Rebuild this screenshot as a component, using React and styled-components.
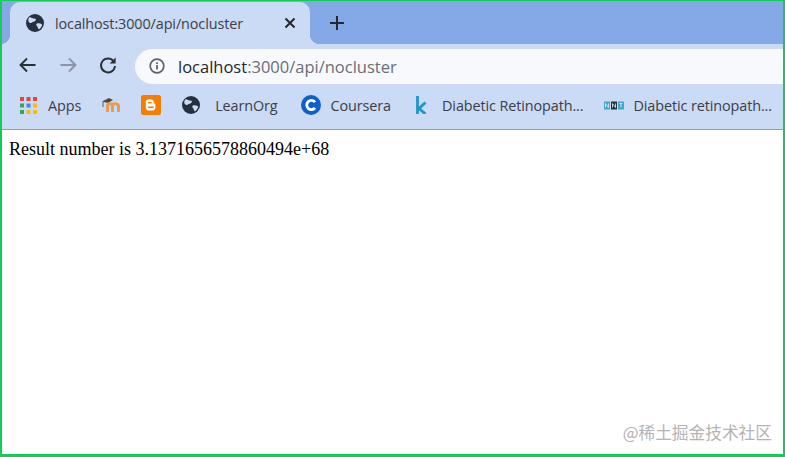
import React from 'react'
import styled, { createGlobalStyle } from 'styled-components'

const GlobalStyle = createGlobalStyle`
  html, body {
    margin: 0;
    padding: 0;
    background: #fff;
    overflow: hidden;
  }
`

const Frame = styled.div`
  box-sizing: border-box;
  width: 785px;
  height: 457px;
  border: solid #12cc55;
  border-width: 1px 2px 3px 2px;
  display: flex;
  flex-direction: column;
  background: #fff;
  position: relative;
  overflow: hidden;
  font-family: 'Open Sans', 'Noto Sans', sans-serif;
`

const TabStrip = styled.div`
  flex: none;
  height: 43px;
  background: #84a9e6;
  display: flex;
  align-items: flex-end;
  padding-left: 8px;
`

const Tab = styled.div`
  width: 300px;
  height: 42px;
  box-sizing: border-box;
  background: #cbdaf5;
  border-radius: 10px 10px 0 0;
  display: flex;
  align-items: center;
  padding: 0 14px 0 16px;
  position: relative;
  &::after {
    content: '';
    position: absolute;
    right: -10px;
    bottom: 0;
    width: 10px;
    height: 10px;
    background: radial-gradient(circle at 100% 0, transparent 10px, #cbdaf5 10.5px);
  }
  &::before {
    content: '';
    position: absolute;
    left: -10px;
    bottom: 0;
    width: 10px;
    height: 10px;
    background: radial-gradient(circle at 0 0, transparent 10px, #cbdaf5 10.5px);
  }
`

const TabTitle = styled.span`
  flex: 1;
  margin-left: 11px;
  font-size: 14.4px;
  letter-spacing: -0.1px;
  color: #3a4048;
  white-space: nowrap;
`

const NewTab = styled.div`
  width: 16px;
  height: 16px;
  margin: 0 0 13px 19px;
  align-self: flex-end;
  display: flex;
`

const Toolbar = styled.div`
  flex: none;
  height: 40px;
  background: #cbdaf5;
  display: flex;
  align-items: flex-end;
  padding-left: 16px;
`

const NavButton = styled.div`
  width: 20px;
  height: 20px;
  margin-right: ${({ $gap }) => $gap}px;
  margin-bottom: 9px;
  display: flex;
`

const AddressBar = styled.div`
  flex: 1;
  height: 35px;
  background: #f7f9fd;
  border-radius: 18px 0 0 18px;
  display: flex;
  align-items: center;
  padding: 0 0 1px 14px;
  box-sizing: border-box;
  margin-right: -2px;
  font-size: 16.5px;
  white-space: nowrap;
`

const Host = styled.span`
  margin-left: 13px;
  color: #24282d;
`

const Path = styled.span`
  color: #6a6f76;
`

const BookmarkBar = styled.div`
  flex: none;
  height: 46px;
  box-sizing: border-box;
  background: #cbdaf5;
  border-bottom: 1px solid #8d9db8;
  display: flex;
  align-items: center;
  padding: 0 0 3px 18px;
`

const Bookmark = styled.div`
  display: flex;
  align-items: center;
  margin-right: ${({ $gap }) => $gap}px;
  font-size: 14.4px;
  letter-spacing: -0.1px;
  color: #3a4048;
  white-space: nowrap;
`

const BookmarkLabel = styled.span`
  margin-left: ${({ $gap }) => $gap}px;
`

const Content = styled.div`
  flex: 1;
  padding: 9px 7px;
  font-family: 'Liberation Serif', 'Times New Roman', serif;
  font-size: 18px;
  line-height: 20px;
  color: #000;
`

const Watermark = styled.div`
  position: absolute;
  right: 11px;
  bottom: 12px;
  font-family: 'Noto Sans CJK SC', 'Noto Sans', sans-serif;
  font-size: 16.7px;
  line-height: 20px;
  color: #b4b4b4;
  white-space: nowrap;
`

const Globe = ({ size = 16 }) => (
  <svg width={size} height={size} viewBox="0 0 16 16" style={{ flex: 'none' }}>
    <circle cx="8" cy="8" r="8" fill="#24303d" />
    <path d="M3 2.8c2 .3 3 1.2 4.6 1.2 1.2 0 1.6 1 .8 2-.8 1-2.4.6-3.2 1.6-.8 1-1.8.4-3-1-.4-1.4-.1-2.6.8-3.8zM9.4 8.6c1.6-.6 3.4-.2 5 .7-.3 1.8-1.4 3.4-3 4.4-.8-.5-.7-1.6-1.2-2.3-.6-.9-1.6-2.2-.8-2.8z" fill="#cbdaf5" />
  </svg>
)

const CloseIcon = () => (
  <svg width="12" height="12" viewBox="0 0 12 12" style={{ flex: 'none' }}>
    <path d="M1.5 1.5l9 9M10.5 1.5l-9 9" stroke="#24282d" strokeWidth="2" fill="none" />
  </svg>
)

const PlusIcon = () => (
  <svg width="16" height="16" viewBox="0 0 16 16">
    <path d="M8 1v14M1 8h14" stroke="#24282d" strokeWidth="2" fill="none" />
  </svg>
)

const ArrowIcon = ({ flip, color }) => (
  <svg width="20" height="20" viewBox="0 0 20 20">
    <path
      d={flip ? 'M2.5 10h15M11 3.5l6.5 6.5-6.5 6.5' : 'M17.5 10h-15M9 3.5L2.5 10 9 16.5'}
      stroke={color}
      strokeWidth="1.9"
      fill="none"
    />
  </svg>
)

const ReloadIcon = () => (
  <svg width="20" height="20" viewBox="0 0 20 20">
    <path d="M15.6 6.2A7 7 0 1 0 17 11" stroke="#2b3036" strokeWidth="1.9" fill="none" />
    <path d="M17.6 2.6v6h-6z" fill="#2b3036" />
  </svg>
)

const InfoIcon = () => (
  <svg width="16" height="16" viewBox="0 0 16 16" style={{ flex: 'none' }}>
    <circle cx="8" cy="8" r="6.8" stroke="#5f6368" strokeWidth="1.7" fill="none" />
    <path d="M7.1 7h1.8v4.6H7.1zM7.1 4.2h1.8V6H7.1z" fill="#5f6368" />
  </svg>
)

const appsColors = ['#e0483e', '#e0483e', '#e0483e', '#34a853', '#4285f4', '#fbbc05', '#34a853', '#fbbc05', '#fbbc05']

const AppsIcon = () => (
  <svg width="17" height="17" viewBox="0 0 17 17" style={{ flex: 'none' }}>
    {appsColors.map((c, i) => (
      <rect key={i} x={(i % 3) * 6.5} y={Math.floor(i / 3) * 6.5} width="4" height="4" fill={c} />
    ))}
  </svg>
)

const MoodleIcon = () => (
  <svg width="21" height="16" viewBox="0 0 21 16" style={{ flex: 'none' }}>
    <path d="M1 4.5L8 1l4 2-5 3z" fill="#4a4a4a" />
    <path d="M2 5v5" stroke="#5a5a5a" strokeWidth="1" />
    <path d="M6.5 15V8.5c0-2 3.5-2.5 4.5-.5 1.2-2 6.5-2 6.5 1.5V15" stroke="#ee9a4d" strokeWidth="3" fill="none" />
    <path d="M11.5 9v6" stroke="#ee9a4d" strokeWidth="3" />
  </svg>
)

const BloggerIcon = () => (
  <svg width="20" height="20" viewBox="0 0 20 20" style={{ flex: 'none' }}>
    <rect width="20" height="20" rx="2.5" fill="#f57d00" />
    <path d="M7 4.5h3.2c1.6 0 2.6 1.1 2.6 2.6v1.4h.6c.6 0 1 .4 1 1v3c0 2-1.3 3.1-3.2 3.1H8c-1.9 0-3.2-1.3-3.2-3.2V7c0-1.5.9-2.5 2.2-2.5z" fill="#fff" />
    <path d="M7.6 7.8h2.4M7.6 12.2h4.6" stroke="#f57d00" strokeWidth="1.5" strokeLinecap="round" />
  </svg>
)

const CourseraIcon = () => (
  <svg width="20" height="20" viewBox="0 0 20 20" style={{ flex: 'none' }}>
    <circle cx="10" cy="10" r="10" fill="#0f5fc8" />
    <path d="M14 7.2a4.6 4.6 0 1 0 0 5.6" stroke="#fff" strokeWidth="2.8" fill="none" />
  </svg>
)

const KaggleIcon = () => (
  <svg width="11" height="18" viewBox="0 0 11 18" style={{ flex: 'none' }}>
    <path d="M1.5 0v18M9.5 6.5L3 12.5l6.5 5.5" stroke="#2095c9" strokeWidth="2.8" fill="none" />
  </svg>
)

const NntIcon = () => (
  <svg width="20" height="9" viewBox="0 0 20 9" style={{ flex: 'none' }}>
    <rect width="6" height="8" y="0.5" fill="#3fa7c9" />
    <rect x="7" width="6" height="8" y="0.5" fill="#26303a" />
    <rect x="14" width="6" height="8" y="0.5" fill="#3fa7c9" />
    <path d="M1.5 6.5v-4l3 4v-4M8.5 6.5v-4l3 4v-4M15.5 2.5h3M17 2.5v4" stroke="#e8f2f6" strokeWidth="0.8" fill="none" />
  </svg>
)

export default function App() {
  return (
    <>
      <GlobalStyle />
      <Frame>
        <TabStrip>
          <Tab>
            <Globe size={18} />
            <TabTitle>localhost:3000/api/nocluster</TabTitle>
            <CloseIcon />
          </Tab>
          <NewTab><PlusIcon /></NewTab>
        </TabStrip>
        <Toolbar>
          <NavButton $gap={20}><ArrowIcon color="#2b3036" /></NavButton>
          <NavButton $gap={20}><ArrowIcon flip color="#8a94a6" /></NavButton>
          <NavButton $gap={17}><ReloadIcon /></NavButton>
          <AddressBar>
            <InfoIcon />
            <Host>localhost</Host>
            <Path>:3000/api/nocluster</Path>
          </AddressBar>
        </Toolbar>
        <BookmarkBar>
          <Bookmark $gap={20}><AppsIcon /><BookmarkLabel $gap={11}>Apps</BookmarkLabel></Bookmark>
          <Bookmark $gap={19}><MoodleIcon /></Bookmark>
          <Bookmark $gap={21}><BloggerIcon /></Bookmark>
          <Bookmark $gap={23}><Globe size={18} /><BookmarkLabel $gap={15}>LearnOrg</BookmarkLabel></Bookmark>
          <Bookmark $gap={25}><CourseraIcon /><BookmarkLabel $gap={10}>Coursera</BookmarkLabel></Bookmark>
          <Bookmark $gap={21}><KaggleIcon /><BookmarkLabel $gap={15}>Diabetic Retinopath...</BookmarkLabel></Bookmark>
          <Bookmark $gap={0}><NntIcon /><BookmarkLabel $gap={9}>Diabetic retinopath...</BookmarkLabel></Bookmark>
        </BookmarkBar>
        <Content>Result number is 3.1371656578860494e+68</Content>
        <Watermark>@稀土掘金技术社区</Watermark>
      </Frame>
    </>
  )
}
